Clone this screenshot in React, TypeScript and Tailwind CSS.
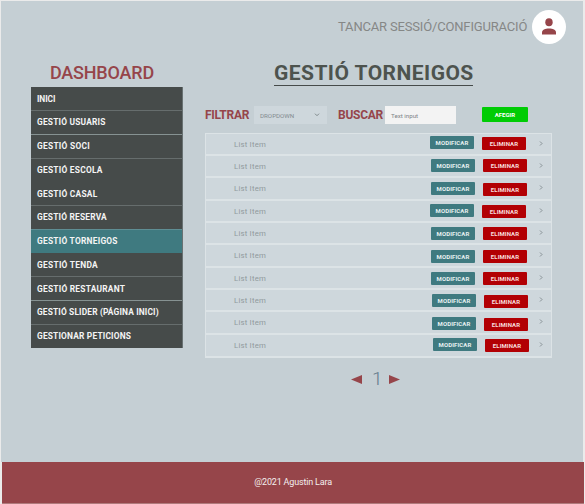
const menu = [
  { label: 'INICI', row: 'h-[24px] border-[#666d6d] tracking-[-0.1px]' },
  { label: 'GESTIÓ USUARIS', row: 'h-[24px] border-[#869292] tracking-[0.2px] pb-px' },
  { label: 'GESTIÓ SOCI', row: 'h-[24px] border-[#666d6d] tracking-[0.27px] pb-px' },
  { label: 'GESTIÓ ESCOLA', row: 'h-[24px] border-[#464b4a] tracking-[0.25px] pb-px' },
  { label: 'GESTIÓ CASAL', row: 'h-[23px] border-[#666d6d] tracking-[0.25px]' },
  { label: 'GESTIÓ RESERVA', row: 'h-[24px] border-[#5f8e94] tracking-[0.2px] pb-px' },
  { label: 'GESTIÓ TORNEIGOS', row: 'h-[24px] border-[#464b4a] bg-[#3f7a80] tracking-[0.25px] pb-px' },
  { label: 'GESTIÓ TENDA', row: 'h-[23px] border-[#666d6d] tracking-[0.28px]' },
  { label: 'GESTIÓ RESTAURANT', row: 'h-[24px] border-[#869292] tracking-[0.24px]' },
  { label: 'GESTIÓ SLIDER (PÁGINA INICI)', row: 'h-[24px] border-[#666d6d] tracking-[0.15px] pb-px' },
  { label: 'GESTIONAR PETICIONS', row: 'h-[23px] border-[#464b4a] tracking-[0.18px]' },
];

const items = [
  { row: 'h-[22px]', edit: 'ml-[158px] mt-[2px]', remove: 'ml-[8px] mt-[3px]', arrow: 'ml-[13px]' },
  { row: 'h-[22px]', edit: 'ml-[159px] mt-[3px]', remove: 'ml-[8px] mt-[3px]', arrow: 'ml-[12px]' },
  { row: 'h-[23px]', edit: 'ml-[159px] mt-[4px]', remove: 'ml-[8px] mt-[5px]', arrow: 'ml-[12px]' },
  { row: 'h-[22px]', edit: 'ml-[158px] mt-[3px]', remove: 'ml-[8px] mt-[4px]', arrow: 'ml-[13px]' },
  { row: 'h-[22px]', edit: 'ml-[159px] mt-[4px]', remove: 'ml-[8px] mt-[4px]', arrow: 'ml-[12px]' },
  { row: 'h-[23px]', edit: 'ml-[159px] mt-[5px]', remove: 'ml-[8px] mt-[5px]', arrow: 'ml-[12px]' },
  { row: 'h-[22px]', edit: 'ml-[159px] mt-[4px]', remove: 'ml-[8px] mt-[4px]', arrow: 'ml-[12px]' },
  { row: 'h-[22px]', edit: 'ml-[160px] mt-[4px]', remove: 'ml-[8px] mt-[5px]', arrow: 'ml-[11px]' },
  { row: 'h-[23px]', edit: 'ml-[160px] mt-[5px]', remove: 'ml-[8px] mt-[6px]', arrow: 'ml-[11px]' },
  { row: 'h-[21px]', edit: 'ml-[161px] mt-[3px]', remove: 'ml-[8px] mt-[4px]', arrow: 'ml-[10px]' },
];

function Header() {
  return (
    <header className="flex h-[51px] items-center justify-end pr-[17px]">
      <span className="mr-[4px] w-[190px] whitespace-nowrap text-[13px] leading-[15px] tracking-[-0.17px] text-[#858786]">
        TANCAR SESSIÓ/CONFIGURACIÓ
      </span>
      <span className="flex size-[34px] items-center justify-center rounded-full bg-white">
        <svg width="14" height="17" viewBox="0 0 14 17" fill="#96454a">
          <ellipse cx="7" cy="4.3" rx="3.7" ry="4" />
          <path d="M0 16.5v-2.2c0-2.3 3.2-3.8 7-3.8s7 1.5 7 3.8v2.2z" />
        </svg>
      </span>
    </header>
  );
}

function Sidebar() {
  return (
    <aside className="ml-[30px] w-[152px]">
      <h2 className="mt-[10px] h-[25px] pl-[19px] whitespace-nowrap text-[18px] leading-[22px] font-medium tracking-[-0.2px] text-[#96454a]">
        DASHBOARD
      </h2>
      <nav className="border-r border-[#687172] bg-[#464b4a]">
        {menu.map((m) => (
          <div key={m.label} className={`flex items-center border-b pl-[6px] text-[8.4px] leading-[12px] font-bold whitespace-nowrap text-[#f4f4f4] ${m.row}`}>
            {m.label}
          </div>
        ))}
      </nav>
    </aside>
  );
}

function Filters() {
  return (
    <div className="mt-[19px] flex h-[19px] items-center">
      <span className="w-[49px] whitespace-nowrap text-[12px] font-bold tracking-[-0.3px] text-[#96454a]">FILTRAR</span>
      <div className="flex h-[18px] w-[73px] items-center justify-between bg-[#ced7dc] pr-[7px] pl-[6px] text-[6.2px] leading-[8px] text-[#828b8f]">
        <span className="pt-[2px]">DROPDOWN</span>
        <svg width="6" height="4" viewBox="0 0 6 4" fill="none" stroke="#7e888b"><path d="M1 .7 3 2.7 5 .7" /></svg>
      </div>
      <span className="ml-[11px] w-[47px] whitespace-nowrap text-[12px] font-bold tracking-[-0.25px] text-[#96454a]">BUSCAR</span>
      <div className="flex h-[18px] w-[71px] items-center bg-[#f3f3f3] pt-[2px] pl-[6px] text-[6.2px] leading-[8px] text-[#7f8588]">Text input</div>
      <button className="ml-[26px] flex h-[15px] w-[46px] items-center justify-center rounded-[1px] bg-[#00cc05] pb-px text-[6px] font-bold text-white">
        AFEGIR
      </button>
    </div>
  );
}

function List() {
  return (
    <div className="mt-[9px] w-[347px] border border-b-2 border-[#dce3e6] bg-[#ced7dc]">
      {items.map((it, i) => (
        <div key={i} className={`flex items-start pl-[28px] ${it.row} ${i < 9 ? 'border-b-2 border-[#dce3e6]' : ''}`}>
          <span className="mt-[5px] w-[38px] whitespace-nowrap text-[7.8px] leading-[12px] tracking-[0.2px] text-[#919a9d]">List Item</span>
          <button className={`flex h-[13px] w-[44px] shrink-0 items-center justify-center rounded-[1px] bg-[#3f7a80] text-[6px] font-bold tracking-[0.1px] text-[#e7f0f0] ${it.edit}`}>
            MODIFICAR
          </button>
          <button className={`flex h-[13px] w-[44px] shrink-0 items-center justify-center rounded-[1px] bg-[#b20004] pb-px text-[6px] font-bold tracking-[0.1px] text-[#f8dddd] ${it.remove}`}>
            ELIMINAR
          </button>
          <svg className={`mt-[7px] ${it.arrow}`} width="4" height="5" viewBox="0 0 4 5" fill="none" stroke="#7f898c" strokeWidth=".9">
            <path d="M1 .5 3 2.5 1 4.5" />
          </svg>
        </div>
      ))}
    </div>
  );
}

export default function App() {
  return (
    <div className="flex h-[504px] w-[585px] flex-col overflow-hidden bg-[#ebebeb] pt-px pl-px font-['Roboto',sans-serif]">
      <div className="h-[461px] w-[582px] bg-[#c5cfd4]">
        <Header />
        <div className="flex">
          <Sidebar />
          <main className="ml-[22px] w-[347px]">
            <h1 className="mt-[9px] ml-[69px] h-[25px] w-[199px] border-b border-[#464b4a] whitespace-nowrap text-[21px] leading-[24px] font-bold tracking-[0.45px] text-[#4d534e]">
              GESTIÓ TORNEIGOS
            </h1>
            <Filters />
            <List />
            <div className="mt-[12px] ml-[146px] flex h-[18px] items-center text-[#96454a]">
              <svg width="11" height="9" viewBox="0 0 11 9" fill="currentColor"><path d="M0 4.5 11 0v9z" /></svg>
              <span className="ml-[10px] w-[12px] text-[19px] leading-[18px] font-light text-[#647b8c]">1</span>
              <svg className="ml-[5px]" width="11" height="9" viewBox="0 0 11 9" fill="currentColor"><path d="M11 4.5 0 0v9z" /></svg>
            </div>
          </main>
        </div>
      </div>
      <footer className="ml-px flex h-[42px] w-[582px] items-center justify-center border-b border-[#b07a7c] bg-[#96454a] pt-px text-[9px] tracking-[-0.18px] text-[#f3eeee]">
        @2021 Agustin Lara
      </footer>
    </div>
  );
}
